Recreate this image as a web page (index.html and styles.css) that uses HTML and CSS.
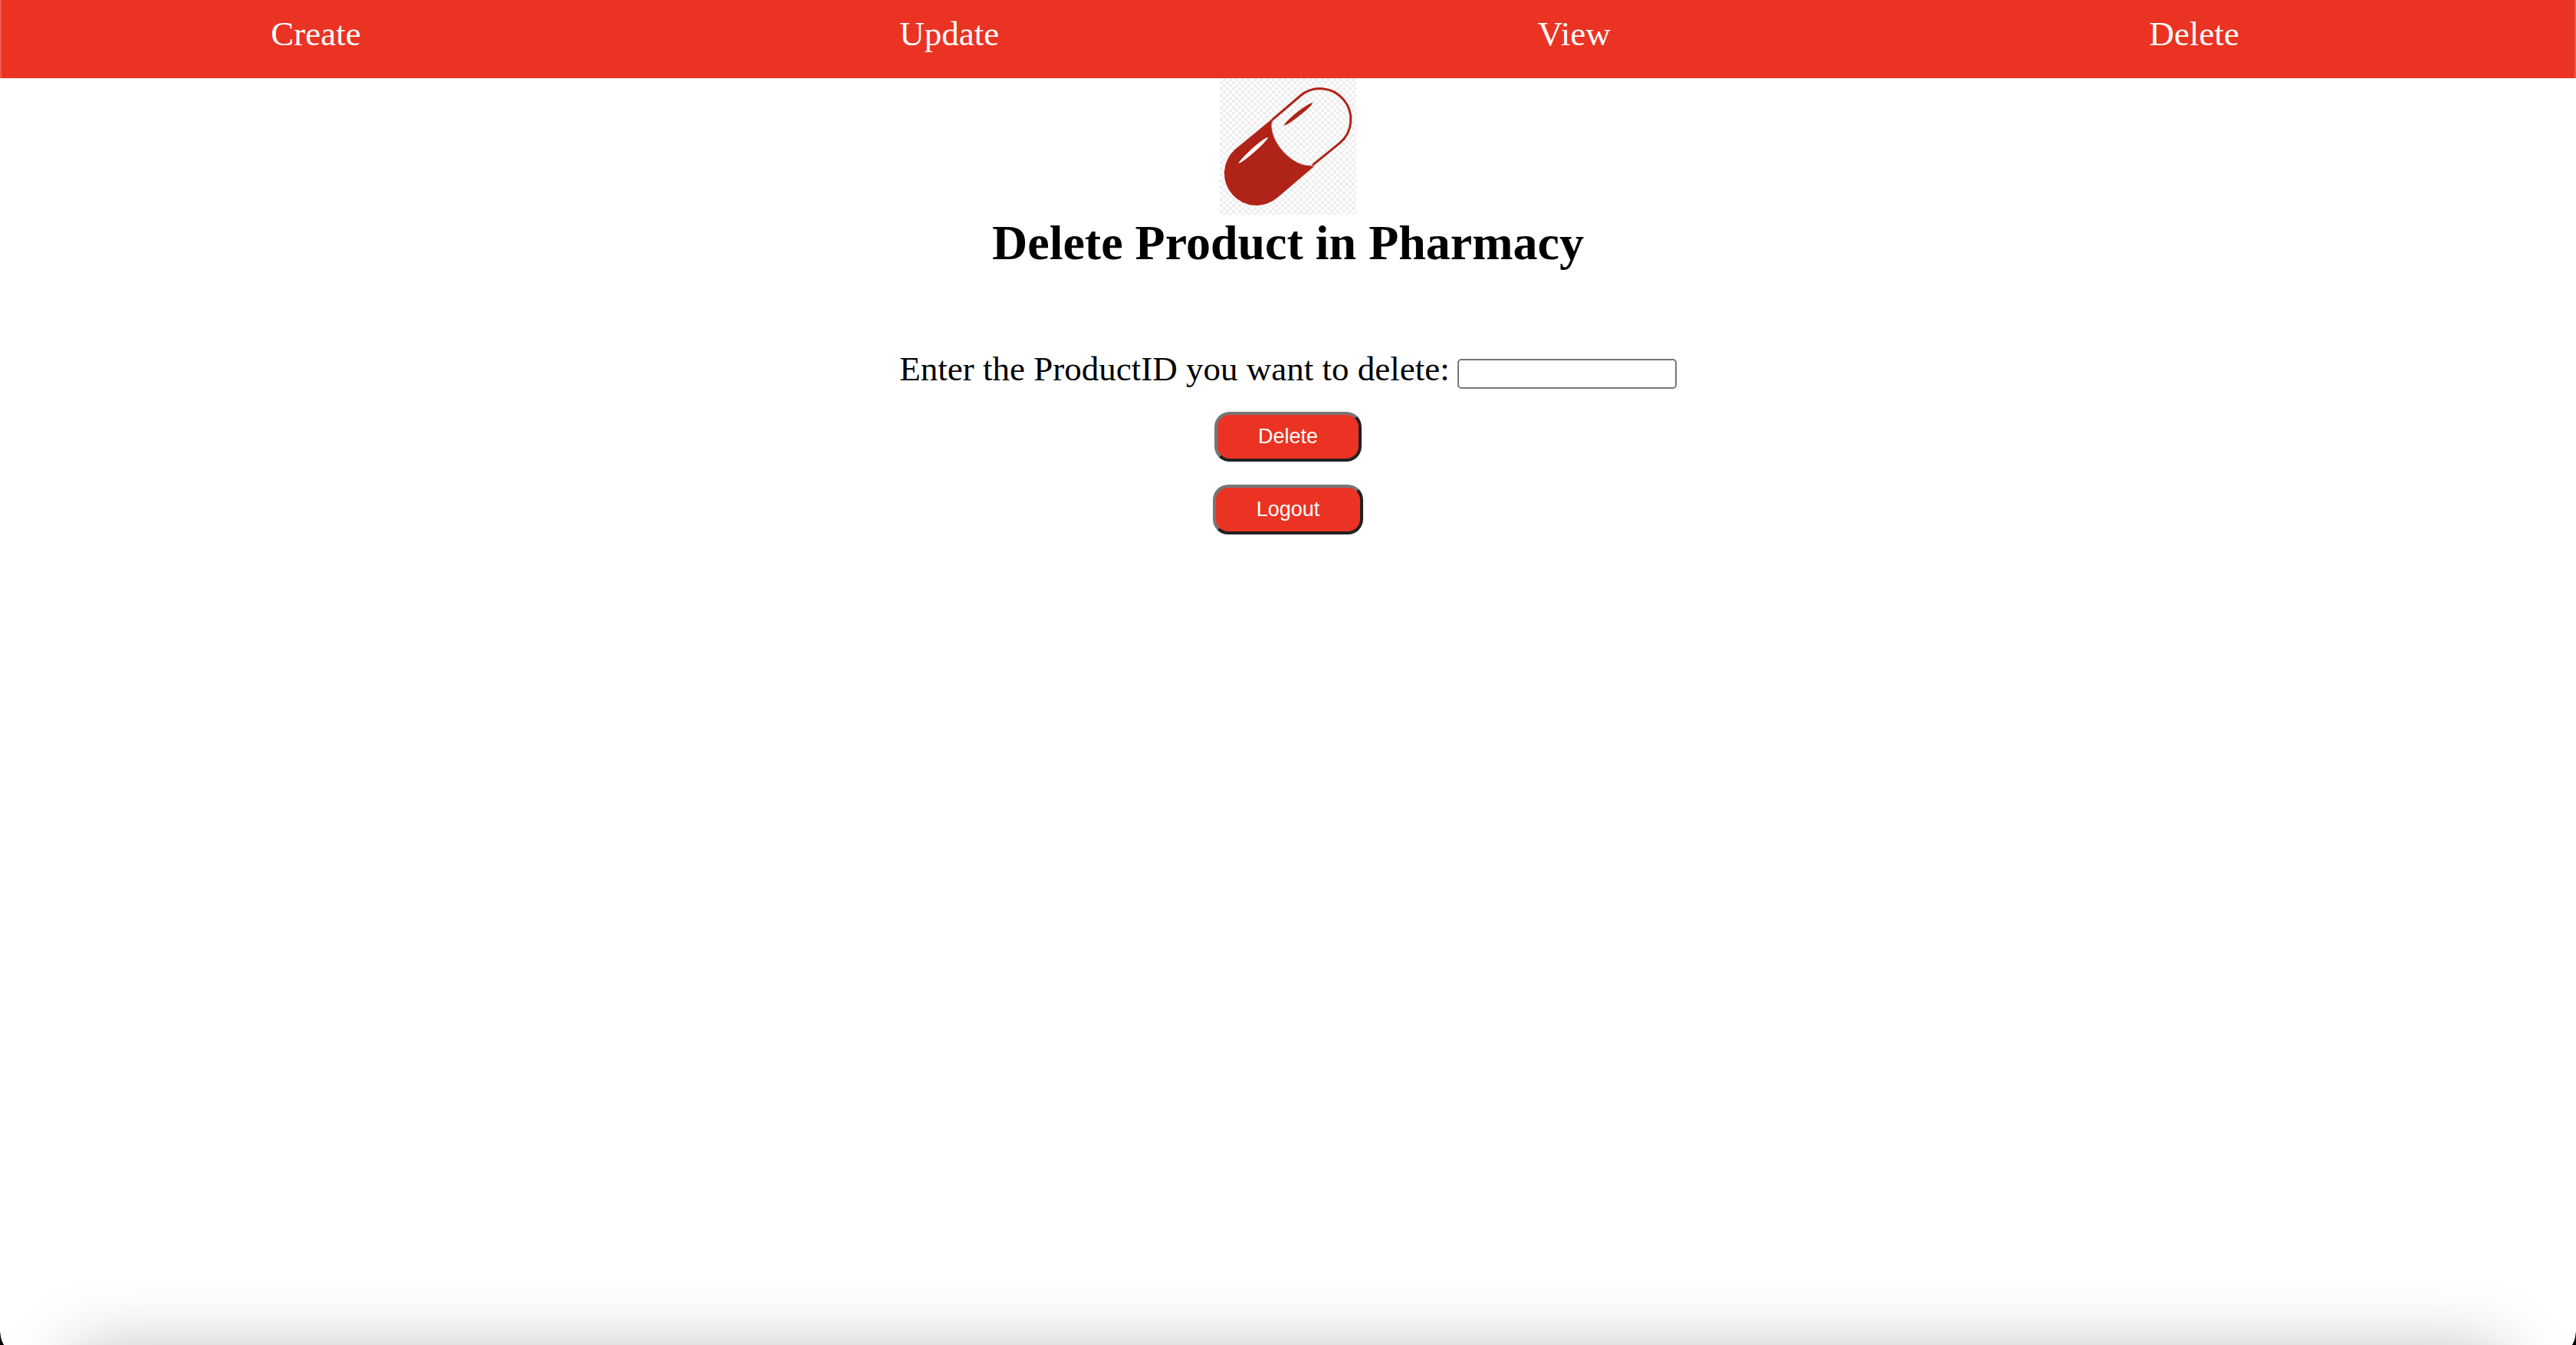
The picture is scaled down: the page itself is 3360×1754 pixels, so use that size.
FILE: index.html
```html
<!DOCTYPE html>
<html lang="en">
<head>
<meta charset="utf-8">
<title>Delete Product in Pharmacy</title>
<link rel="stylesheet" href="styles.css">
</head>
<body>
<nav class="navbar">
  <a href="#create">Create</a>
  <a href="#update">Update</a>
  <a href="#view">View</a>
  <a href="#delete">Delete</a>
</nav>
<main class="content">
  <svg class="logo" viewBox="0 0 534 534" role="img" aria-label="Pill">
    <defs>
      <pattern id="checker" width="24" height="24" patternUnits="userSpaceOnUse">
        <path fill="#eee" d="M12 0h12v12H12zM0 12h12v12H0z"/>
      </pattern>
    </defs>
    <rect width="534" height="534" fill="url(#checker)"/>
    <path fill="none" stroke="#b02318" stroke-width="9" d="M205 163L315 69A120 120 0 0 1 470 253L362 341"/>
    <path fill="#b02318" d="M205 159L60 278A124 124 0 1 0 227 466L370 344Q355 342 342 341C280 335 207 259 203 190Q201 177 208 165Z"/>
    <path fill="none" stroke="#b8aaaa" stroke-width="2" d="M208 165Q201 177 203 190C207 259 280 335 342 341Q355 342 366 336"/>
    <path fill="#fff" d="M73 333Q80 319 125 277Q171 235 189 231Q183 247 137 287Q89 329 73 333Z"/>
    <path fill="#b02318" d="M251 185Q255 172 301 134Q348 98 364 96Q362 107 315 144Q266 183 251 185Z"/>
  </svg>
  <h1 class="title">Delete Product in Pharmacy</h1>
  <form class="form">
    <div class="field">
      <label for="product-id">Enter the ProductID you want to delete:</label>
      <input id="product-id" type="text">
    </div>
    <button class="button" type="submit">Delete</button>
    <button class="button" type="button">Logout</button>
  </form>
</main>
<div class="window-edge"></div>
</body>
</html>
```

FILE: styles.css
```css
body {
  margin: 0;
  background: #fff;
  color: #000;
  font-family: "Liberation Serif", "Times New Roman", serif;
  font-size: 45px;
  line-height: 52px;
}

.navbar {
  display: flex;
  justify-content: space-around;
  box-sizing: border-box;
  padding: 18px 86px 32px 0;
  border: solid #ee5a4e;
  border-width: 0 2px;
  background: #ea3323;
}

.navbar a {
  color: #fff;
  text-decoration: none;
}

.content {
  display: flex;
  flex-direction: column;
  align-items: center;
}

.logo {
  display: block;
  width: 178px;
  height: 178px;
}

.title {
  margin: 0;
  font-size: 64px;
  line-height: 74px;
}

.form {
  display: flex;
  flex-direction: column;
  align-items: center;
  gap: 30px;
  margin-top: 101px;
}

.field {
  display: flex;
  align-items: flex-end;
  gap: 10px;
}

.field input {
  box-sizing: border-box;
  width: 286px;
  height: 39px;
  padding: 2px 4px;
  border: 2px solid #767676;
  border-radius: 5px;
  background: #fff;
  font: 27px "Liberation Sans", Arial, sans-serif;
}

.button {
  padding: 13px 53px;
  border: 4px solid;
  border-color: #767676 #212121 #212121 #767676;
  border-radius: 20px;
  background: #ea3323;
  color: #fff;
  font: 27px/31px "Liberation Sans", Arial, sans-serif;
}

/* Shade and rounded corners along the bottom of the window */
.window-edge {
  position: fixed;
  inset: auto 0 0;
  height: 100px;
  overflow: hidden;
  pointer-events: none;
}

.window-edge::before {
  content: "";
  position: absolute;
  inset: 108px 90px -100px;
  border-radius: 30px;
  box-shadow: 0 0 90px rgba(0, 0, 0, 0.27);
}

.window-edge::after {
  content: "";
  position: absolute;
  inset: auto 0 0;
  height: 16px;
  background:
    radial-gradient(circle at 30px 0, transparent 29px, #000 30px) left / 5px 16px no-repeat,
    radial-gradient(circle at -25px 0, transparent 29px, #000 30px) right / 5px 16px no-repeat;
}
```
